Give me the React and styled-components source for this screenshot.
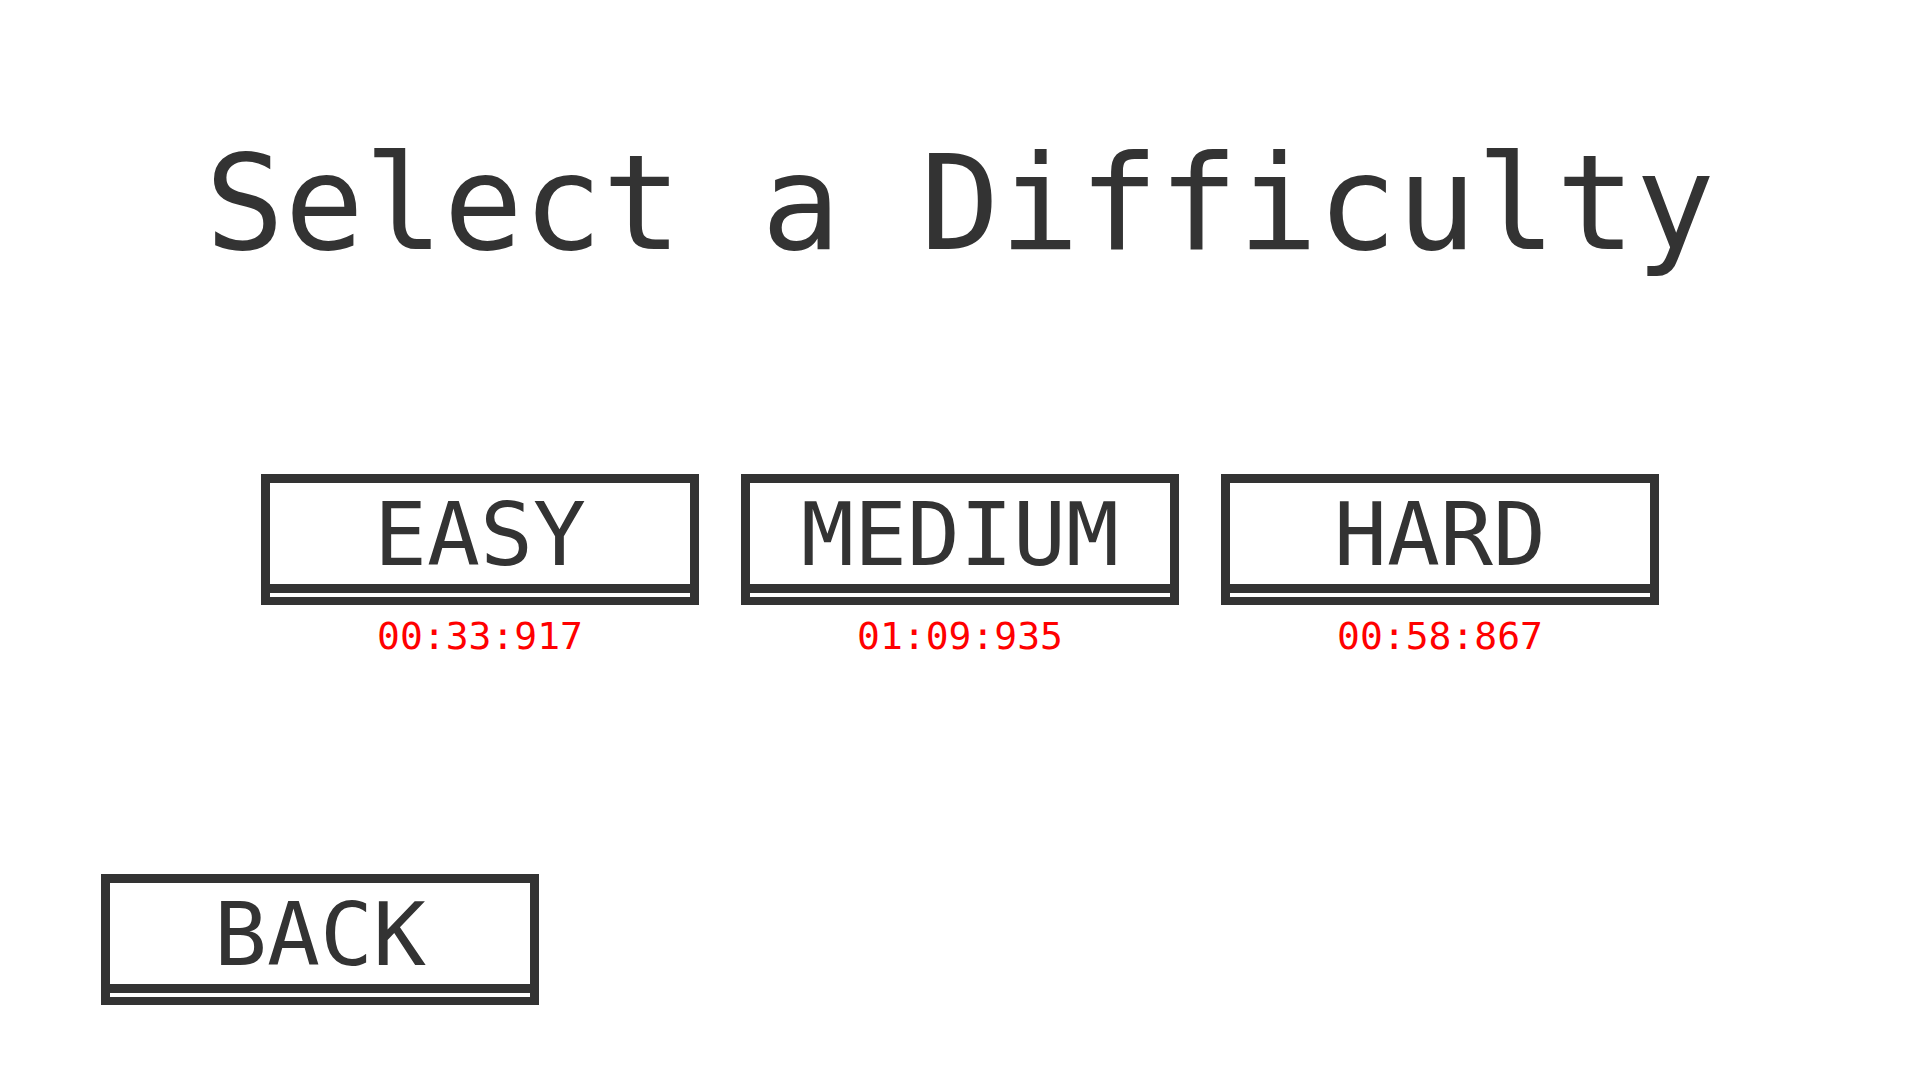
import React from "react";
import styled, { createGlobalStyle } from "styled-components";

const GlobalStyle = createGlobalStyle`
  html, body {
    margin: 0;
    padding: 0;
    background: #ffffff;
  }
  body {
    font-family: "DejaVu Sans Mono", "Liberation Mono", monospace;
    color: #333333;
  }
`;

const Page = styled.div`
  box-sizing: border-box;
  width: 100%;
  height: 100vh;
  display: flex;
  flex-direction: column;
  align-items: center;
  padding-top: 137px;
  padding-bottom: 75px;
`;

const Title = styled.h1`
  margin: 0;
  font-family: "DejaVu Sans Mono", "Liberation Mono", monospace;
  font-weight: normal;
  font-size: 132px;
  line-height: 132px;
  color: #333333;
  white-space: pre;
`;

const Row = styled.div`
  display: flex;
  justify-content: center;
  gap: 42px;
  margin-top: 205px;
`;

const Option = styled.div`
  display: flex;
  flex-direction: column;
  align-items: center;
`;

const PixelButton = styled.button`
  box-sizing: border-box;
  width: 438px;
  height: 131px;
  padding: 0;
  margin: 0;
  background: #ffffff;
  border-style: solid;
  border-color: #333333;
  border-width: 9px 9px 8px 9px;
  border-radius: 0;
  display: flex;
  flex-direction: column;
  cursor: pointer;
`;

const Face = styled.span`
  box-sizing: content-box;
  height: 98px;
  padding-top: 3px;
  display: flex;
  align-items: center;
  justify-content: center;
  border-bottom: 9px solid #333333;
  font-family: "DejaVu Sans Mono", "Liberation Mono", monospace;
  font-size: 88px;
  line-height: 88px;
  color: #333333;
`;

const Ledge = styled.span`
  display: block;
  height: 4px;
  background: #ffffff;
`;

const Time = styled.div`
  margin-top: 12px;
  font-family: "DejaVu Sans Mono", "Liberation Mono", monospace;
  font-size: 38px;
  line-height: 38px;
  color: #ff0000;
`;

const BackWrap = styled.div`
  margin-top: auto;
  align-self: flex-start;
  margin-left: 101px;
`;

function DifficultyButton({ label, time }) {
  return (
    <Option>
      <PixelButton>
        <Face>{label}</Face>
        <Ledge />
      </PixelButton>
      <Time>{time}</Time>
    </Option>
  );
}

export default function App() {
  return (
    <>
      <GlobalStyle />
      <Page>
        <Title>Select a Difficulty</Title>
        <Row>
          <DifficultyButton label="EASY" time="00:33:917" />
          <DifficultyButton label="MEDIUM" time="01:09:935" />
          <DifficultyButton label="HARD" time="00:58:867" />
        </Row>
        <BackWrap>
          <PixelButton>
            <Face>BACK</Face>
            <Ledge />
          </PixelButton>
        </BackWrap>
      </Page>
    </>
  );
}
